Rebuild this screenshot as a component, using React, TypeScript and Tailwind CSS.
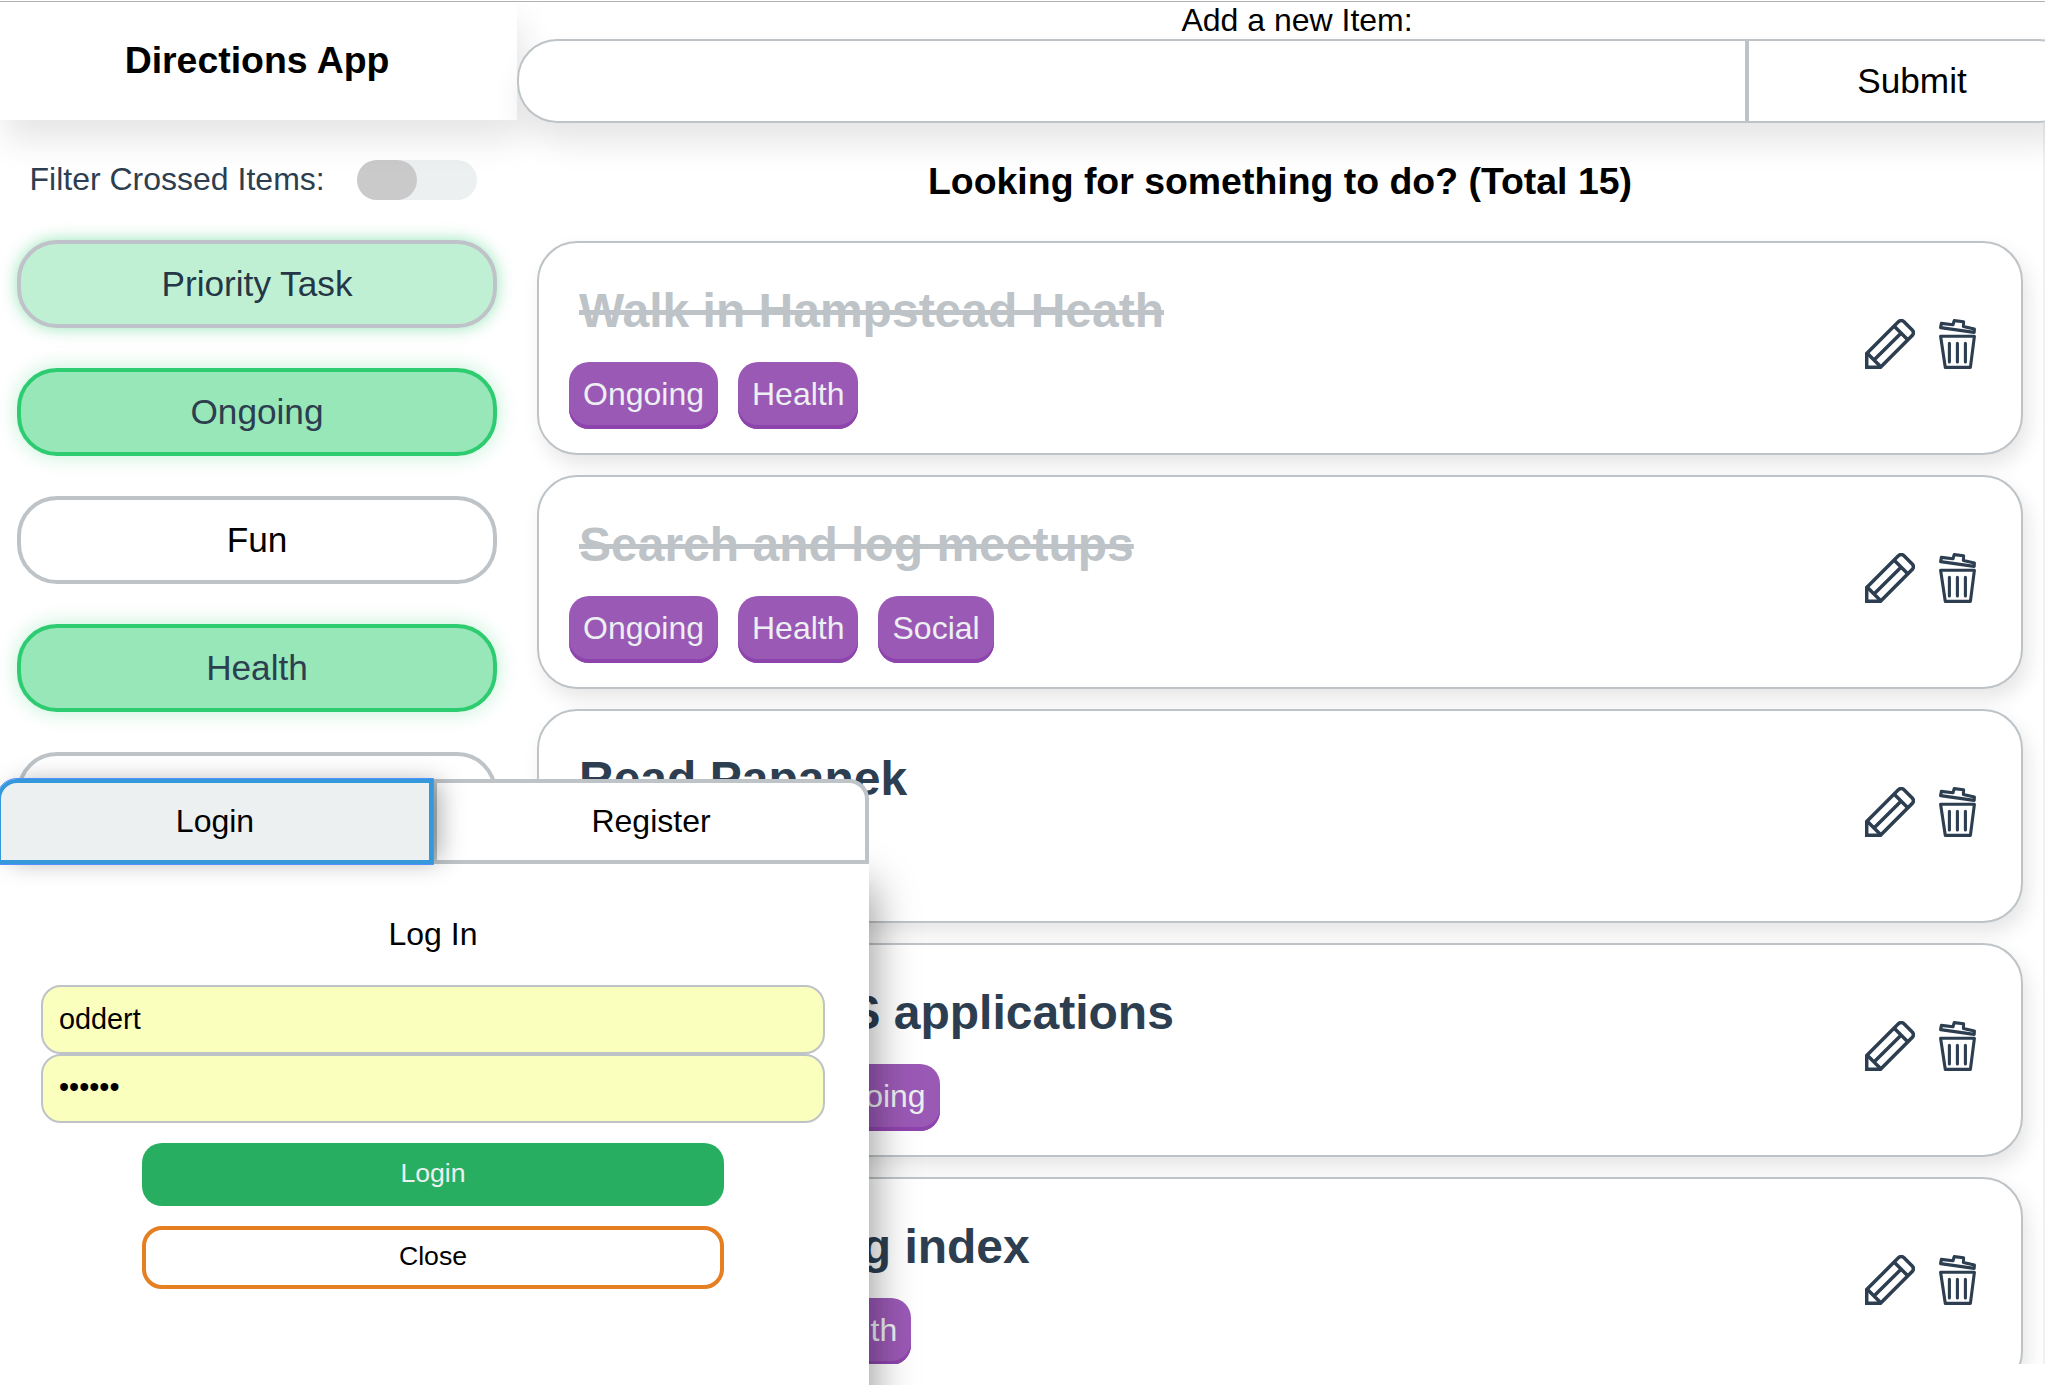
import React from 'react';

type Item = { title: string; done?: boolean; tags: string[] };

const items: Item[] = [
  { title: 'Walk in Hampstead Heath', done: true, tags: ['Ongoing', 'Health'] },
  { title: 'Search and log meetups', done: true, tags: ['Ongoing', 'Health', 'Social'] },
  { title: 'Read Papanek', tags: [] },
  { title: 'Check old JS applications', tags: ['Priority Task', 'Ongoing'] },
  { title: 'Draft learning index', tags: ['Priority Task', 'Health'] },
];

const filters = [
  { label: 'Priority Task', style: 'border-[#bfc2c8] bg-[#c0f0d4] text-[#253746] shadow-[0_0_16px_rgba(46,204,113,0.5)]' },
  { label: 'Ongoing', style: 'border-[#2ecc71] bg-[#97e7b8] text-[#2c3e50] shadow-[0_0_20px_rgba(46,204,113,0.3)]' },
  { label: 'Fun', style: 'border-[#bdc3c7] bg-white text-black' },
  { label: 'Health', style: 'border-[#2ecc71] bg-[#97e7b8] text-[#2c3e50] shadow-[0_0_20px_rgba(46,204,113,0.3)]' },
  { label: '', style: 'border-[#bdc3c7] bg-white text-black' },
];

function Pencil() {
  return (
    <svg className="h-[50px] w-[50px]" viewBox="0 0 50 50" fill="none" stroke="#2c3e50" strokeWidth="3.5">
      <path d="M1.7 34.5 33.6 2.6Q36.3.4 39 2.8L47.2 11Q49.6 13.6 47.4 16.3L15.5 48.3H1.7Z" />
      <path d="M29.5 7.5 43 21M2.5 34.5 16 48M9 41 36.5 13.8" />
    </svg>
  );
}

function Trash() {
  return (
    <svg className="h-[50px] w-[37px]" viewBox="0 0 37 50" fill="none" stroke="#2c3e50" strokeWidth="3.1" strokeLinejoin="round">
      <path d="M1.6 8.6 2.4 4.4 14 5.8 15.2 1.6 24.6 2.8 24.4 7.4 35.4 10 35.2 13.4Z" />
      <path d="M1.6 17.3H35.4L31.4 48.4H6.3Z" />
      <path strokeLinecap="round" d="M10.4 24.3V43M18.4 24.3V43M26.4 24.3V43" />
    </svg>
  );
}

function Card({ item }: { item: Item }) {
  return (
    <article className="flex h-[214px] shrink-0 items-center justify-between rounded-[40px] border-2 border-[#bdc3c7] bg-white pr-[45px] pl-[30px] shadow-[5px_10px_20px_rgba(0,0,0,0.1)]">
      <div className="h-full pt-[40px]">
        <h2 className={item.done ? 'pl-[10px] text-[48px] leading-[55px] font-bold text-[#bdc3c7] line-through decoration-[5px]' : 'pl-[10px] text-[48px] leading-[55px] font-bold text-[#2c3e50]'}>
          {item.title}
        </h2>
        <div className="mt-[24px] flex gap-[20px]">
          {item.tags.map((t) => (
            <span key={t} className="h-[67px] rounded-[20px] bg-[#9b59b6] px-[14px] text-[32px] leading-[65px] text-[#ecf0f1] shadow-[inset_0_-4px_0_#8e44ad]">
              {t}
            </span>
          ))}
        </div>
      </div>
      <div className="flex gap-[24px] pb-[8px]">
        <Pencil />
        <Trash />
      </div>
    </article>
  );
}

function LoginPanel() {
  return (
    <section className="absolute top-[779px] left-[-3px] h-[640px] w-[872px]">
      <div className="relative z-10 flex h-[85px]">
        <button className="relative z-10 w-[436px] rounded-tl-[20px] border-4 border-[#3498db] bg-[#ecf0f1] pb-[2px] text-[32px] shadow-[10px_0_26px_-4px_rgba(0,0,0,0.35)] outline-[1.5px] outline-[#4d90fe]">
          Login
        </button>
        <button className="w-[436px] rounded-tr-[20px] border-4 border-[#bdc3c7] bg-white pb-[2px] text-[32px]">Register</button>
      </div>
      <div className="flex h-[560px] flex-col items-center bg-white px-[44px] shadow-[4px_20px_40px_rgba(0,0,0,0.4)]">
        <p className="mt-[52px] text-[32px] leading-[37px]">Log In</p>
        <input readOnly value="oddert" className="mt-[32px] h-[69px] w-full shrink-0 rounded-[20px] border-2 border-[#bdc3c7] bg-[#faffbd] px-[16px] text-[28.8px] outline-none" />
        <input readOnly type="password" value="oddert" className="h-[69px] w-full shrink-0 rounded-[20px] border-2 border-[#bdc3c7] bg-[#faffbd] px-[16px] pb-[2px] text-[28.8px] outline-none" />
        <button className="mt-[20px] h-[63px] w-[582px] shrink-0 rounded-[20px] bg-[#27ae60] pb-[3px] text-[26.67px] text-[#ecf0f1]">Login</button>
        <button className="mt-[20px] h-[63px] w-[582px] shrink-0 rounded-[20px] border-4 border-[#e67e22] bg-white pb-[3px] text-[26.67px]">Close</button>
      </div>
    </section>
  );
}

export default function App() {
  return (
    <div className="relative flex h-[1385px] w-[2045px] flex-col overflow-hidden bg-white pt-px font-['Liberation_Sans',Arial,sans-serif] text-black">
      <div className="h-px shrink-0 bg-[#b3b3b3]" />
      <header className="relative z-10 flex h-[121px] shrink-0">
        <h3 className="h-[118px] w-[517px] shrink-0 bg-white text-center text-[37.44px] leading-[117px] font-bold shadow-[5px_20px_32px_rgba(0,0,0,0.1)]">
          <span className="pr-[3px]">Directions App</span>
        </h3>
        <form className="flex w-[1562px] shrink-0 flex-col">
          <label className="h-[37px] pr-[2px] text-center text-[32px] leading-[36px]">Add a new Item:</label>
          <div className="flex h-[84px] rounded-[40px] shadow-[5px_20px_32px_rgba(0,0,0,0.1)]">
            <input readOnly className="w-[1228px] rounded-l-[40px] border-2 border-r-0 border-[#bdc3c7] bg-white outline-none" />
            <button type="button" className="w-[334px] rounded-r-[40px] border-2 border-l-4 border-[#bdc3c7] bg-white pr-[2px] text-[35.2px]">Submit</button>
          </div>
        </form>
      </header>
      <div className="flex h-[1241px] shrink-0">
        <aside className="flex w-[517px] shrink-0 flex-col overflow-hidden">
          <div className="mt-[37px] flex h-[40px] shrink-0 items-center pl-[29.5px]">
            <span className="w-[327.5px] pb-px text-[32px] leading-[37px] text-[#2c3e50]">Filter Crossed Items:</span>
            <div className="h-[40px] w-[120px] rounded-[20px] bg-[#ecf0f1]">
              <div className="h-[40px] w-[60px] rounded-[20px] bg-[#cacaca]" />
            </div>
          </div>
          <div className="mt-[40px] flex flex-col gap-[40px] px-[17px]">
            {filters.map((f) => (
              <button key={f.label} className={`h-[88px] w-[480px] shrink-0 rounded-[40px] border-4 text-[35.2px] ${f.style}`}>
                {f.label}
              </button>
            ))}
          </div>
        </aside>
        <main className="flex w-[1526px] shrink-0 flex-col gap-[20px] overflow-hidden pr-[20px] pl-[20px]">
          <h3 className="-mb-[20px] h-[118px] shrink-0 pt-[37px] text-center text-[37.44px] leading-[43px] font-bold">Looking for something to do? (Total 15)</h3>
          {items.map((item) => (
            <Card key={item.title} item={item} />
          ))}
        </main>
        <div className="w-[2px] bg-[#f1f1f1]" />
      </div>
      <LoginPanel />
    </div>
  );
}
